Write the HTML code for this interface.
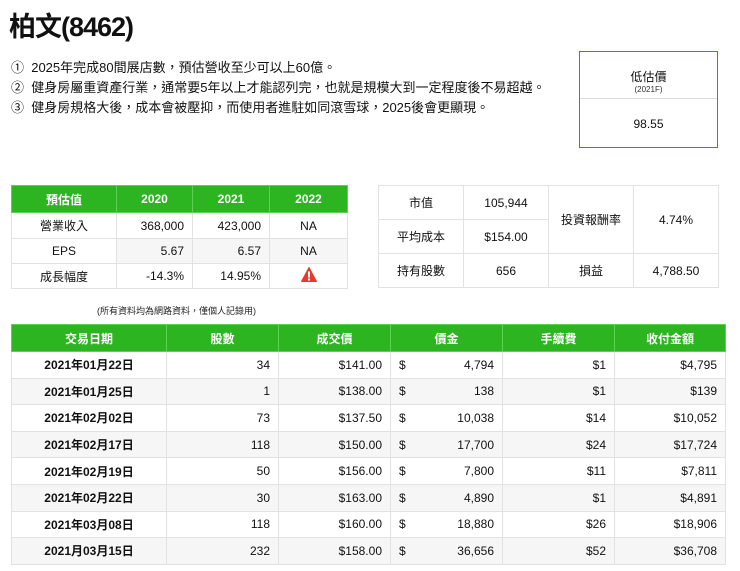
<!DOCTYPE html>
<html><head><meta charset="utf-8"><style>
body{margin:0;width:740px;height:571px;background:#fff;font-family:"Liberation Sans","Noto Sans CJK TC",sans-serif;color:#111;position:relative;overflow:hidden}
.a{position:absolute}
h1{position:absolute;left:9px;top:5px;margin:0;font-size:27px;font-weight:bold;letter-spacing:-1px}
.l{position:absolute;left:11px;font-size:13px}
table{position:absolute;border-collapse:collapse;font-size:12px;table-layout:fixed}
td,th{border:1px solid #e2e2e2;padding:0 8px;white-space:nowrap}
th{background:#2db521;color:#fff;font-weight:bold;text-align:center;border-color:#5fcf55}
.r{text-align:right}.c{text-align:center}
.g td{background:#f6f6f6}
</style></head><body>
<h1>柏文(8462)</h1>
<div class="l" style="top:57px">①&nbsp; 2025年完成80間展店數，預估營收至少可以上60億。</div>
<div class="l" style="top:77px">②&nbsp; 健身房屬重資產行業，通常要5年以上才能認列完，也就是規模大到一定程度後不易超越。</div>
<div class="l" style="top:97px">③&nbsp; 健身房規格大後，成本會被壓抑，而使用者進駐如同滾雪球，2025後會更顯現。</div>
<div class="a" style="left:579px;top:51px;width:137px;height:95px;border:1px solid #4a6fd0;text-align:center">
<div style="height:47px;border-bottom:1px solid #ddd;font-size:12px;padding-top:16px;box-sizing:border-box">低估價<div style="font-size:8px;color:#333">(2021F)</div></div>
<div style="font-size:12px;padding-top:18px">98.55</div></div>

<table style="left:11px;top:185px;width:336px">
<colgroup><col style="width:105px"><col style="width:76px"><col style="width:77px"><col style="width:78px"></colgroup>
<tr style="height:27px"><th>預估值</th><th>2020</th><th>2021</th><th>2022</th></tr>
<tr style="height:26px"><td class="c">營業收入</td><td class="r">368,000</td><td class="r">423,000</td><td class="c">NA</td></tr>
<tr style="height:25px" class="g"><td class="c" style="background:#fff">EPS</td><td class="r">5.67</td><td class="r">6.57</td><td class="c">NA</td></tr>
<tr style="height:25px"><td class="c">成長幅度</td><td class="r">-14.3%</td><td class="r">14.95%</td><td class="c"><svg width="16" height="15" viewBox="0 0 16 15"><path d="M8 0.5L15.5 14.5H0.5Z" fill="#e8392f" stroke="#e8392f" stroke-linejoin="round"/><rect x="7" y="4.5" width="2" height="6" fill="#fff"/><rect x="7" y="11.5" width="2" height="2" fill="#fff"/></svg></td></tr>
</table>

<table style="left:378px;top:185px;width:340px;font-size:12px">
<colgroup><col style="width:85px"><col style="width:85px"><col style="width:85px"><col style="width:85px"></colgroup>
<tr style="height:34px"><td class="c">市值</td><td class="c">105,944</td><td class="c" rowspan="2">投資報酬率</td><td class="c" rowspan="2">4.74%</td></tr>
<tr style="height:34px"><td class="c">平均成本</td><td class="c">$154.00</td></tr>
<tr style="height:34px"><td class="c">持有股數</td><td class="c">656</td><td class="c">損益</td><td class="c">4,788.50</td></tr>
</table>

<div class="a" style="left:97px;top:304px;font-size:9px;color:#222">(所有資料均為網路資料，僅個人記錄用)</div>

<table style="left:11px;top:324px;width:714px">
<colgroup><col style="width:155px"><col style="width:112px"><col style="width:112px"><col style="width:112px"><col style="width:112px"><col style="width:111px"></colgroup>
<tr style="height:27px"><th>交易日期</th><th>股數</th><th>成交價</th><th>價金</th><th>手續費</th><th>收付金額</th></tr>
<tr style="height:26.6px"><td class="c"><b>2021年01月22日</b></td><td class="r">34</td><td class="r">$141.00</td><td>$<span style="float:right">4,794</span></td><td class="r">$1</td><td class="r">$4,795</td></tr>
<tr style="height:26.6px" class="g"><td class="c"><b>2021年01月25日</b></td><td class="r">1</td><td class="r">$138.00</td><td>$<span style="float:right">138</span></td><td class="r">$1</td><td class="r">$139</td></tr>
<tr style="height:26.6px"><td class="c"><b>2021年02月02日</b></td><td class="r">73</td><td class="r">$137.50</td><td>$<span style="float:right">10,038</span></td><td class="r">$14</td><td class="r">$10,052</td></tr>
<tr style="height:26.6px" class="g"><td class="c"><b>2021年02月17日</b></td><td class="r">118</td><td class="r">$150.00</td><td>$<span style="float:right">17,700</span></td><td class="r">$24</td><td class="r">$17,724</td></tr>
<tr style="height:26.6px"><td class="c"><b>2021年02月19日</b></td><td class="r">50</td><td class="r">$156.00</td><td>$<span style="float:right">7,800</span></td><td class="r">$11</td><td class="r">$7,811</td></tr>
<tr style="height:26.6px" class="g"><td class="c"><b>2021年02月22日</b></td><td class="r">30</td><td class="r">$163.00</td><td>$<span style="float:right">4,890</span></td><td class="r">$1</td><td class="r">$4,891</td></tr>
<tr style="height:26.6px"><td class="c"><b>2021年03月08日</b></td><td class="r">118</td><td class="r">$160.00</td><td>$<span style="float:right">18,880</span></td><td class="r">$26</td><td class="r">$18,906</td></tr>
<tr style="height:26.6px" class="g"><td class="c"><b>2021月03月15日</b></td><td class="r">232</td><td class="r">$158.00</td><td>$<span style="float:right">36,656</span></td><td class="r">$52</td><td class="r">$36,708</td></tr>
</table>
</body></html>
